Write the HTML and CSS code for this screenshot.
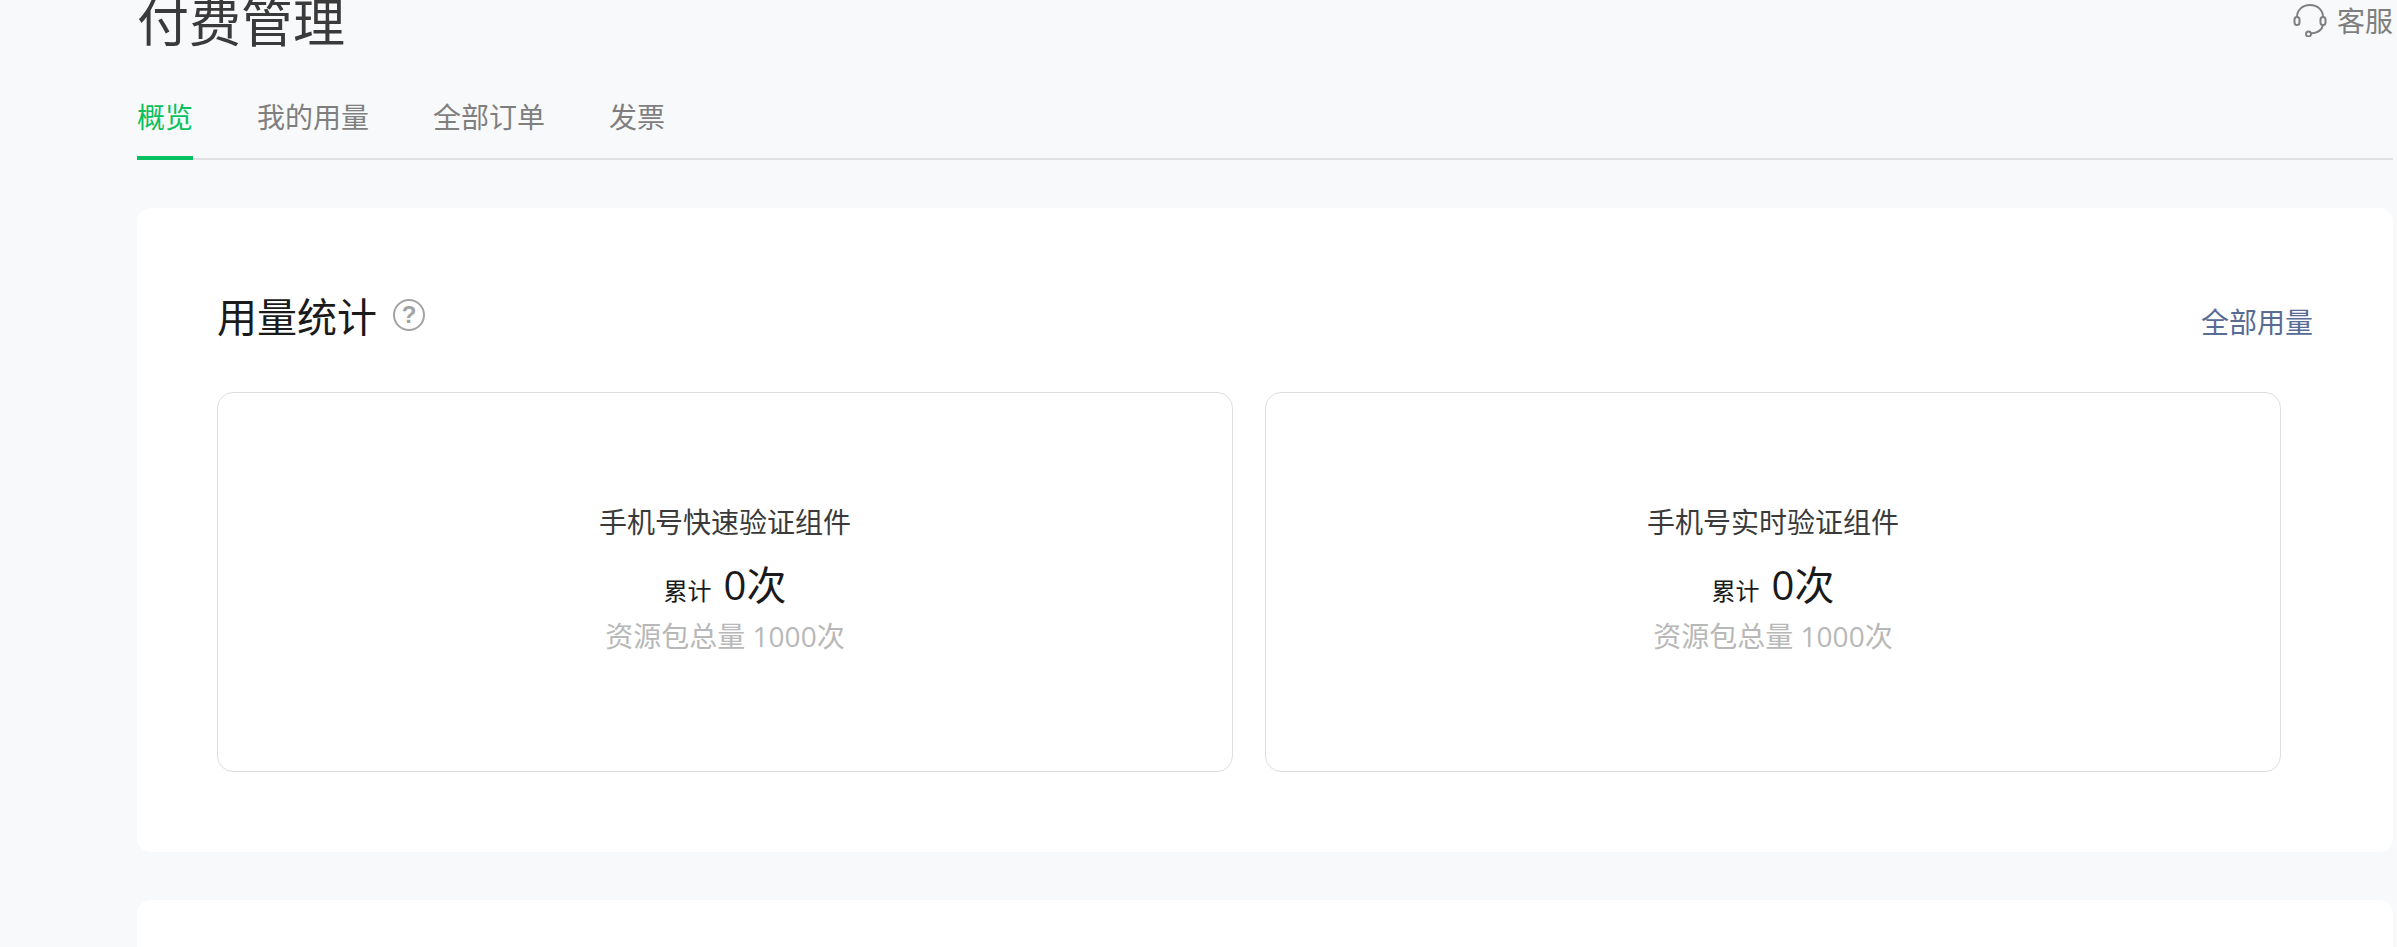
FILE: index.html
```html
<!DOCTYPE html>
<html lang="zh-CN">
<head>
    <meta charset="UTF-8">
    <meta name="viewport" content="width=device-width, initial-scale=1.0">
    <title>付费管理</title>
    <link rel="stylesheet" href="styles.css">
</head>
<body>
    <div class="page">
        <div class="header">
            <h1 class="page-title">付费管理</h1>
            <a class="service">
                <svg class="service-icon" viewBox="0 0 34 34" fill="none" stroke="#7f7f7f" stroke-width="2">
                    <path d="M4 14C4 7 9.500 2 17 2s13 5 13 12"/>
                    <rect x="1.500" y="14" width="5" height="8" rx="2.500"/>
                    <rect x="27.500" y="14" width="5" height="8" rx="2.500"/>
                    <path d="M30 22c-1 5-6 8-12 8.500"/>
                    <circle cx="15.500" cy="31" r="2.500"/>
                </svg>
                <span>客服</span>
            </a>
        </div>

        <!-- 标签 -->
        <div class="tabs">
            <a class="tab tab-active">概览</a>
            <a class="tab">我的用量</a>
            <a class="tab">全部订单</a>
            <a class="tab">发票</a>
        </div>

        <div class="panel">
            <div class="panel-head">
                <div class="panel-title">
                    <h2>用量统计</h2>
                    <span class="help">?</span>
                </div>
                <a class="panel-link">全部用量</a>
            </div>
            <div class="usage-list">
                <div class="usage-card">
                    <p class="usage-name">手机号快速验证组件</p>
                    <p class="usage-total"><span class="usage-label">累计</span><span class="usage-num">0次</span></p>
                    <p class="usage-quota">资源包总量 1000次</p>
                </div>
                <div class="usage-card">
                    <p class="usage-name">手机号实时验证组件</p>
                    <p class="usage-total"><span class="usage-label">累计</span><span class="usage-num">0次</span></p>
                    <p class="usage-quota">资源包总量 1000次</p>
                </div>
            </div>
        </div>

        <div class="panel panel-next"></div>
    </div>
</body>
</html>
```

FILE: styles.css
```css
html, body {
    height: 100%;
    margin: 0;
    overflow: hidden;
}
body {
    font-family: "Noto Sans CJK SC", "Noto Sans", sans-serif;
    background: #f8f9fb;
}
p, h1, h2 {
    margin: 0;
    font-weight: normal;
}
.page {
    padding: 0 4px 0 137px;
}
.header {
    display: flex;
    justify-content: space-between;
    align-items: flex-start;
    height: 56px;
}
.page-title {
    margin-top: -16px;
    font-size: 52px;
    line-height: 72px;
    color: #3a3a3a;
}
.service {
    display: flex;
    align-items: center;
    margin-top: 2px;
    font-size: 28px;
    line-height: 36px;
    color: #7f7f7f;
}
.service-icon {
    width: 34px;
    height: 34px;
    margin-right: 10px;
}
.tabs {
    display: flex;
    gap: 64px;
    margin-top: 38px;
    height: 64px;
    border-bottom: 2px solid #dfe1e5;
}
.tab {
    height: 64px;
    font-size: 28px;
    line-height: 44px;
    color: #7f7f7f;
}
.tab-active {
    color: #07c160;
    border-bottom: 4px solid #07c160;
    height: 62px;
}
.panel {
    margin-top: 48px;
    padding: 79px 80px 80px;
    background: #fff;
    border-radius: 14px;
    box-sizing: border-box;
    height: 644px;
}
.panel-next {
    height: 200px;
}
.panel-head {
    display: flex;
    justify-content: space-between;
    align-items: flex-end;
    height: 105px;
}
.panel-title {
    display: flex;
    align-items: center;
    align-self: flex-start;
}
.panel-title h2 {
    font-size: 40px;
    line-height: 56px;
    color: #1a1a1a;
}
.help {
    width: 28px;
    height: 28px;
    margin-left: 16px;
    border: 2px solid #a3a3a3;
    border-radius: 50%;
    font-family: "Liberation Sans", sans-serif;
    font-weight: bold;
    font-size: 24px;
    line-height: 28px;
    text-align: center;
    color: #a3a3a3;
}
.panel-link {
    margin-bottom: 51px;
    font-size: 28px;
    line-height: 40px;
    color: #576b95;
}
.usage-list {
    display: grid;
    grid-template-columns: 1fr 1fr;
    gap: 32px;
    margin-right: 32px;
}
.usage-card {
    height: 380px;
    padding-bottom: 7px;
    border: 1px solid #dedede;
    border-radius: 16px;
    box-sizing: border-box;
    display: flex;
    flex-direction: column;
    align-items: center;
    justify-content: center;
}
.usage-name {
    font-size: 28px;
    line-height: 40px;
    color: #3a3a3a;
}
.usage-total {
    display: flex;
    align-items: baseline;
    margin-top: 16px;
    color: #1a1a1a;
}
.usage-label {
    font-size: 24px;
    margin-right: 12px;
}
.usage-num {
    font-family: "Open Sans", "Noto Sans CJK SC", sans-serif;
    font-size: 40px;
    line-height: 56px;
}
.usage-quota {
    margin-top: 3px;
    font-family: "Open Sans", "Noto Sans CJK SC", sans-serif;
    font-size: 28px;
    line-height: 40px;
    color: #b8b8b8;
}
```
